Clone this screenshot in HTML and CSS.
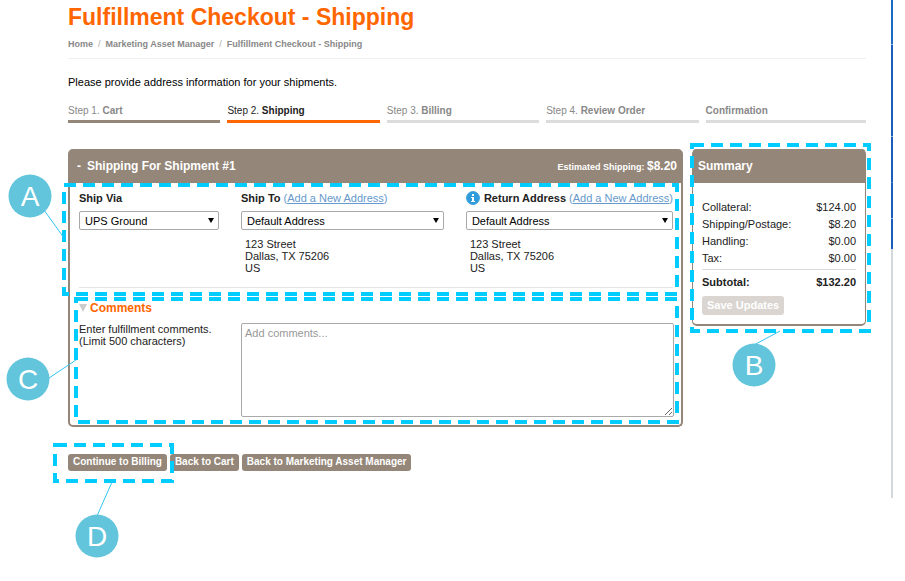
FILE: index.html
```html
<!DOCTYPE html>
<html lang="en">
<head>
    <meta charset="UTF-8">
    <meta name="viewport" content="width=device-width, initial-scale=1.0">
    <title>Fulfillment Checkout - Shipping</title>
    <link rel="stylesheet" href="styles.css">
</head>
<body>
    <div class="page">
        <main class="content">
            <h1>Fulfillment Checkout - Shipping</h1>
            <nav class="breadcrumb">
                <a href="#">Home</a>
                <span>/</span>
                <a href="#">Marketing Asset Manager</a>
                <span>/</span>
                <a href="#">Fulfillment Checkout - Shipping</a>
            </nav>

            <p class="intro">Please provide address information for your shipments.</p>

            <ol class="steps">
                <li class="done">Step 1. <b>Cart</b></li>
                <li class="current">Step 2. <b>Shipping</b></li>
                <li>Step 3. <b>Billing</b></li>
                <li>Step 4. <b>Review Order</b></li>
                <li><b>Confirmation</b></li>
            </ol>

            <div class="columns">
                <section class="panel shipment">
                    <header class="panel-head">
                        <h2><span class="toggle">-</span>Shipping For Shipment #1</h2>
                        <p class="estimate">Estimated Shipping: <b>$8.20</b></p>
                    </header>

                    <div class="addresses">
                        <div class="field">
                            <div class="field-label"><label for="via">Ship Via</label></div>
                            <div class="select">
                                <select id="via"><option>UPS Ground</option></select>
                            </div>
                        </div>
                        <div class="field">
                            <div class="field-label"><label for="shipTo">Ship To</label> <span class="add">(<a href="#">Add a New Address</a>)</span></div>
                            <div class="select">
                                <select id="shipTo"><option>Default Address</option></select>
                            </div>
                            <address>123 Street<br>Dallas, TX 75206<br>US</address>
                        </div>
                        <div class="field">
                            <div class="field-label">
                                <svg class="info" viewBox="0 0 14 14" aria-hidden="true">
                                    <circle cx="7" cy="7" r="6.5" fill="#2d9bdc" stroke="#4aa5d8"/>
                                    <path d="M6 3h2v2H6zM5 6h3v4h1v1H5v-1h1V7H5z" fill="#fff"/>
                                </svg>
                                <label for="returnTo">Return Address</label> <span class="add">(<a href="#">Add a New Address</a>)</span>
                            </div>
                            <div class="select">
                                <select id="returnTo"><option>Default Address</option></select>
                            </div>
                            <address>123 Street<br>Dallas, TX 75206<br>US</address>
                        </div>

                        <!-- A -->
                        <svg class="callout callout-a">
                            <rect width="100%" height="100%"/>
                            <line x1="-20" y1="25" x2="0" y2="53"/>
                            <circle cx="-34" cy="11" r="21.5"/>
                            <text x="-34" y="21">A</text>
                        </svg>
                    </div>

                    <div class="comments">
                        <h3><span class="arrow"></span>Comments</h3>
                        <div class="comments-row">
                            <label for="comments">Enter fulfillment comments.<br>(Limit 500 characters)</label>
                            <textarea id="comments" placeholder="Add comments..."></textarea>
                        </div>

                        <!-- C -->
                        <svg class="callout callout-c">
                            <rect width="100%" height="100%"/>
                            <line x1="-27" y1="79" x2="0" y2="61"/>
                            <circle cx="-48" cy="80" r="21.5"/>
                            <text x="-48" y="90">C</text>
                        </svg>
                    </div>
                </section>

                <aside class="panel summary">
                    <header class="panel-head"><h2>Summary</h2></header>
                    <div class="summary-body">
                        <table>
                            <tbody>
                                <tr><th>Collateral:</th><td>$124.00</td></tr>
                                <tr><th>Shipping/Postage:</th><td>$8.20</td></tr>
                                <tr><th>Handling:</th><td>$0.00</td></tr>
                                <tr><th>Tax:</th><td>$0.00</td></tr>
                            </tbody>
                            <tfoot>
                                <tr><th>Subtotal:</th><td>$132.20</td></tr>
                            </tfoot>
                        </table>
                        <button class="btn save" type="button">Save Updates</button>
                    </div>

                    <!-- B -->
                    <svg class="callout callout-b">
                        <rect width="100%" height="100%"/>
                        <line x1="62" y1="200" x2="88" y2="186"/>
                        <circle cx="62" cy="220" r="21.5"/>
                        <text x="62" y="230">B</text>
                    </svg>
                </aside>
            </div>

            <div class="actions">
                <div class="primary">
                    <button class="btn" type="button">Continue to Billing</button>

                    <!-- D -->
                    <svg class="callout callout-d">
                        <rect width="100%" height="100%"/>
                        <line x1="42" y1="71" x2="57" y2="37"/>
                        <circle cx="42" cy="91" r="21.5"/>
                        <text x="42" y="101">D</text>
                    </svg>
                </div>
                <button class="btn" type="button">Back to Cart</button>
                <button class="btn" type="button">Back to Marketing Asset Manager</button>
            </div>
        </main>
        <div class="edge"></div>
    </div>
</body>
</html>
```
FILE: styles.css
```css
* {
    box-sizing: border-box;
}

body {
    margin: 0;
    background: #fff;
    color: #222;
    font-family: "Liberation Sans", Arial, sans-serif;
    font-size: 11px;
    line-height: 12px;
}

h1, h2, h3, p, ol {
    margin: 0;
    padding: 0;
}

button, select, textarea {
    font-family: inherit;
    font-size: inherit;
}

.page {
    display: flex;
    align-items: flex-start;
    gap: 25px;
    min-height: 100vh;
    padding: 0 12px 0 68px;
}

.content {
    flex: 1;
    padding-top: 3px;
    padding-bottom: 100px;
}

h1 {
    color: #ff6600;
    font-size: 23px;
    line-height: 28px;
}

.breadcrumb {
    display: flex;
    gap: 5px;
    padding: 7px 0 8px;
    border-bottom: 1px solid #f0f0f0;
    font-size: 9px;
    color: #aaa;
}

.breadcrumb a {
    color: #888;
    font-weight: bold;
    text-decoration: none;
}

.intro {
    margin-top: 17px;
    color: #000;
}

.steps {
    display: grid;
    grid-template-columns: repeat(4, 19fr) 20fr;
    gap: 7px;
    margin-top: 17px;
    list-style: none;
    font-size: 10px;
    color: #888;
}

.steps li {
    padding-bottom: 3px;
    border-bottom: 3px solid #dcdcdc;
}

.steps .done {
    border-color: #948678;
}

.steps .current {
    border-color: #ff6600;
    color: #222;
}

.columns {
    display: flex;
    align-items: flex-start;
    gap: 9px;
    margin-top: 26px;
}

.panel {
    position: relative;
    border: 2px solid #948678;
    border-top: 0;
    border-radius: 5px;
}

.shipment {
    flex: 1;
}

.panel-head {
    display: flex;
    align-items: center;
    justify-content: space-between;
    height: 34px;
    padding: 0 4px 0 7px;
    background: #948678;
    border-radius: 3px 3px 0 0;
    color: #fff;
}

.panel-head h2 {
    font-size: 12px;
}

.toggle {
    margin-right: 6px;
}

.estimate {
    font-size: 9px;
    font-weight: bold;
}

.estimate b {
    font-size: 12px;
}

.addresses {
    position: relative;
    display: grid;
    grid-template-columns: 140px 1fr 1fr;
    gap: 22px;
    margin: 0 8px 0 9px;
    padding: 7px 0 13px;
    border-bottom: 1px solid #e6e6e6;
}

.field-label {
    display: flex;
    align-items: center;
    gap: 3px;
    height: 16px;
    margin-bottom: 5px;
    white-space: nowrap;
}

.field-label label {
    font-weight: bold;
}

.info {
    width: 14px;
    height: 14px;
    margin-right: 1px;
}

.add,
.add a {
    color: #6699cc;
}

.select {
    position: relative;
}

.select::after {
    content: "";
    position: absolute;
    top: 7px;
    right: 5px;
    border: 3px solid transparent;
    border-top: 5px solid #000;
    border-bottom: 0;
    pointer-events: none;
}

.select select {
    display: block;
    width: 100%;
    height: 19px;
    padding: 0 5px;
    appearance: none;
    background: #fff;
    border: 1px solid #a9a9a9;
    border-radius: 2px;
    color: #000;
}

address {
    padding: 8px 4px 0;
    font-style: normal;
}

.comments {
    position: relative;
    margin: 0 7px 0 9px;
    padding: 13px 0 8px;
}

.comments h3 {
    display: flex;
    align-items: center;
    gap: 3px;
    color: #ff6600;
    font-size: 12px;
    line-height: 14px;
}

.arrow {
    border: 4px solid transparent;
    border-top: 8px solid #ccc;
    border-bottom: 0;
}

.comments-row {
    display: grid;
    grid-template-columns: 140px 1fr;
    gap: 22px;
    margin-top: 8px;
}

textarea {
    display: block;
    width: 100%;
    height: 94px;
    padding: 3px;
    border: 1px solid #a9a9a9;
    border-radius: 2px;
    line-height: 12px;
}

textarea::placeholder {
    color: #999;
}

.summary {
    width: 174px;
    border-left-width: 1px;
    border-right-width: 1px;
}

.summary .panel-head {
    padding-left: 5px;
}

.summary-body {
    padding: 16px 9px 9px;
}

table {
    width: 100%;
    margin-bottom: 5px;
    border-collapse: collapse;
    font-size: 11px;
    line-height: 17px;
}

th, td {
    padding: 0;
    font-weight: normal;
    text-align: left;
}

td {
    text-align: right;
}

tbody tr:last-child > * {
    padding-bottom: 2px;
}

tfoot th,
tfoot td {
    padding-top: 4px;
    border-top: 1px solid #dcdcdc;
    font-weight: bold;
}

.btn {
    display: block;
    padding: 2px 5px 3px;
    background: #948678;
    border: 0;
    border-radius: 3px;
    color: #fff;
    font-size: 10px;
    font-weight: bold;
    line-height: 12px;
}

.save {
    height: 19px;
    background: #dad5d0;
    font-size: 11px;
}

.actions {
    display: flex;
    gap: 3px;
    margin-top: 27px;
}

.primary {
    position: relative;
}

.edge {
    width: 2px;
    height: 498px;
    background: linear-gradient(
        #1a6bc4 44px, #8fb4e0 44px 45px,
        #1a5dba 45px 136px, #8fb4e0 136px 137px,
        #1a5dba 137px 182px, #4a80cc 182px 183px,
        #1a5dba 183px 218px, #8fb4e0 218px 219px,
        #1a5dba 219px 249px, #d3d8dd 249px
    );
}

/* Lettered callouts with a dashed frame */
.callout {
    position: absolute;
    overflow: visible;
    pointer-events: none;
}

.callout rect {
    fill: none;
    stroke: #00ccff;
    stroke-width: 4;
    stroke-dasharray: 12 7;
}

.callout line {
    stroke: #33c5f3;
}

.callout circle {
    fill: #62c5db;
}

.callout text {
    fill: #fff;
    font-size: 28px;
    text-anchor: middle;
}

.callout-a {
    top: 2px;
    left: -15px;
    width: calc(100% + 19px);
    height: 109px;
}

.callout-b {
    top: -4px;
    left: -1px;
    width: calc(100% + 5px);
    height: 186px;
}

.callout-c {
    top: 11px;
    left: -3px;
    width: calc(100% + 6px);
    height: 123px;
}

.callout-d {
    top: -9px;
    left: -13px;
    width: 117px;
    height: 36px;
}
```
